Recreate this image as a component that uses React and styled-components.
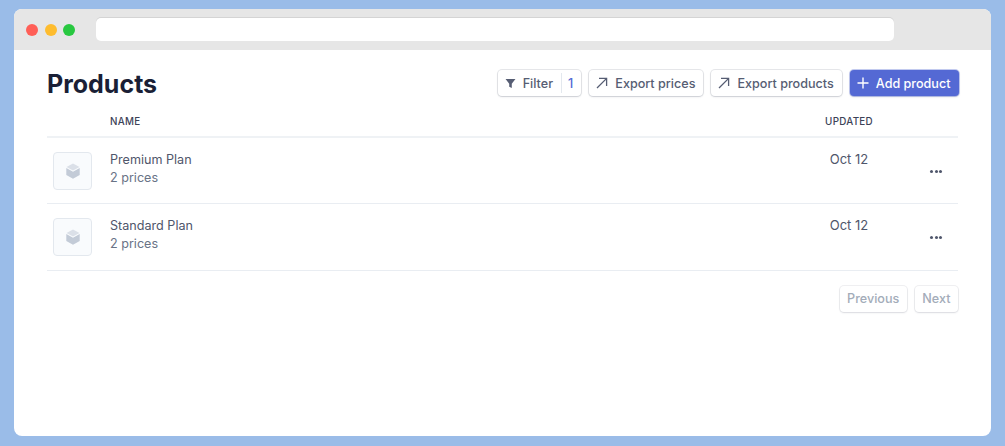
import React from "react";
import styled, { createGlobalStyle } from "styled-components";

const products = [
  { name: "Premium Plan", prices: "2 prices", updated: "Oct 12" },
  { name: "Standard Plan", prices: "2 prices", updated: "Oct 12" },
];

function ArrowIcon() {
  return (
    <Icon viewBox="0 0 12 12" fill="none" stroke="currentColor" strokeWidth="1.3">
      <path d="M1 11 L10.4 1.6 M3 1.4 H10.6 V9" />
    </Icon>
  );
}

function BoxIcon() {
  return (
    <svg width="14" height="16" viewBox="0 0 14 16">
      <path d="M7 0.5 L13.5 4 L7 7.5 L0.5 4 Z" fill="#dbe0e8" />
      <path d="M0.3 5 L7 8.7 L13.7 5 V12 L7 15.7 L0.3 12 Z" fill="#c3cbd7" />
    </svg>
  );
}

export default function App() {
  return (
    <>
      <GlobalStyle />
      <Page>
        <Browser>
          <TitleBar>
            <Lights>
              <Light color="#ff5f57" />
              <Light color="#febc2e" />
              <Light color="#28c840" />
            </Lights>
            <AddressBar />
          </TitleBar>
          <Content>
            <Header>
              <Title>Products</Title>
              <Actions>
                <Button>
                  <FilterIcon viewBox="0 0 12 12" fill="currentColor">
                    <path d="M0.6 1.2 H11.4 L7.4 6.2 V11 L4.6 9.6 V6.2 Z" />
                  </FilterIcon>
                  Filter
                  <FilterCount>1</FilterCount>
                </Button>
                <Button>
                  <ArrowIcon />
                  Export prices
                </Button>
                <Button>
                  <ArrowIcon />
                  Export products
                </Button>
                <PrimaryButton>
                  <Icon viewBox="0 0 12 12" fill="none" stroke="currentColor" strokeWidth="1.4">
                    <path d="M6 0.5 V11.5 M0.5 6 H11.5" />
                  </Icon>
                  Add product
                </PrimaryButton>
              </Actions>
            </Header>
            <HeadRow>
              <span />
              <HeadCell>NAME</HeadCell>
              <HeadCell $center>UPDATED</HeadCell>
              <span />
            </HeadRow>
            {products.map((product) => (
              <Row key={product.name}>
                <Thumb>
                  <BoxIcon />
                </Thumb>
                <NameCell>
                  <Name>{product.name}</Name>
                  <Prices>{product.prices}</Prices>
                </NameCell>
                <Updated>{product.updated}</Updated>
                <More>
                  <Dot />
                  <Dot />
                  <Dot />
                </More>
              </Row>
            ))}
            <Pagination>
              <PageButton>Previous</PageButton>
              <PageButton>Next</PageButton>
            </Pagination>
          </Content>
        </Browser>
      </Page>
    </>
  );
}

const GlobalStyle = createGlobalStyle`
  html, body {
    margin: 0;
    padding: 0;
  }
  body {
    font-family: Inter, "Liberation Sans", sans-serif;
    background: #9abce8;
  }
`;

const Page = styled.div`
  width: 1005px;
  height: 446px;
  box-sizing: border-box;
  padding: 9px 14px 10px;
  background: #9abce8;
`;

const Browser = styled.div`
  height: 100%;
  display: flex;
  flex-direction: column;
  background: #fff;
  border-radius: 8px;
  overflow: hidden;
`;

const TitleBar = styled.div`
  flex: 0 0 41px;
  display: flex;
  align-items: center;
  gap: 21px;
  padding: 0 97px 0 12px;
  background: #e6e6e6;
`;

const Lights = styled.div`
  display: flex;
  gap: 6.5px;
`;

const Light = styled.span`
  width: 12px;
  height: 12px;
  border-radius: 50%;
  background: ${(p) => p.color};
`;

const AddressBar = styled.div`
  flex: 1;
  height: 23px;
  background: #fff;
  border-radius: 5px;
  box-shadow: 0 -1px 0 #d4d4d4;
`;

const Content = styled.div`
  flex: 1;
  padding: 20px 33px 0;
`;

const Header = styled.div`
  display: flex;
  align-items: center;
  justify-content: space-between;
  height: 26px;
`;

const Title = styled.h1`
  margin: 2px 0 0;
  font-size: 25px;
  font-weight: 700;
  color: #1a1f36;
`;

const Actions = styled.div`
  display: flex;
  gap: 8px;
  margin-right: -0.5px;
`;

const Button = styled.button`
  display: flex;
  align-items: center;
  gap: 7px;
  height: 26px;
  padding: 0 8px 0 7px;
  border: 0;
  border-radius: 4px;
  background: #fff;
  color: #565d73;
  font: 500 12.6px Inter, sans-serif;
  box-shadow: 0 0 0 1px rgba(60, 66, 87, 0.12), 0 1px 2px rgba(60, 66, 87, 0.16);
`;

const PrimaryButton = styled(Button)`
  background: #5469d4;
  color: #fff;
  box-shadow: 0 0 0 1px rgba(84, 105, 212, 0.35), 0 1px 2px rgba(60, 66, 87, 0.2);
`;

const FilterCount = styled.span`
  align-self: stretch;
  display: flex;
  align-items: center;
  margin-left: 1px;
  padding-left: 6px;
  color: #5469d4;
  border-left: 1px solid #e3e8ee;
  margin-block: 3px;
`;

const Icon = styled.svg`
  width: 12px;
  height: 12px;
  flex-shrink: 0;
`;

const FilterIcon = styled(Icon)`
  width: 11px;
  height: 11px;
`;

const columns = `
  display: grid;
  grid-template-columns: 63px 1fr 78px 70px;
  align-items: center;
  border-bottom: 1px solid #e9edf2;
`;

const HeadRow = styled.div`
  ${columns}
  height: 41.5px;
  padding-top: 12px;
  box-sizing: border-box;
  border-bottom-width: 2px;
  border-bottom-color: #eff2f5;
`;

const HeadCell = styled.div`
  font-size: 9.8px;
  font-weight: 500;
  letter-spacing: 0.3px;
  color: #3c4257;
  text-align: ${(p) => (p.$center ? "center" : "left")};
`;

const Row = styled.div`
  ${columns}
  height: 66.5px;
  box-sizing: border-box;
`;

const Thumb = styled.div`
  width: 39px;
  height: 38px;
  margin: 1px 0 0 6px;
  display: flex;
  align-items: center;
  justify-content: center;
  box-sizing: border-box;
  border: 1px solid #e3e8ee;
  border-radius: 4px;
  background: #f9fbfd;
`;

const NameCell = styled.div`
  display: flex;
  flex-direction: column;
  gap: 2px;
  margin-top: -3px;
`;

const Name = styled.div`
  font-size: 12.6px;
  line-height: 16px;
  color: #4f566b;
`;

const Prices = styled.div`
  font-size: 12.6px;
  line-height: 16px;
  color: #697386;
`;

const Updated = styled.div`
  align-self: start;
  padding-top: 13px;
  font-size: 13px;
  line-height: 16px;
  text-align: center;
  color: #4f566b;
`;

const More = styled.div`
  display: flex;
  justify-content: flex-end;
  gap: 1.5px;
  padding-right: 16px;
  margin-top: 1.5px;
`;

const Dot = styled.span`
  width: 3px;
  height: 3px;
  border-radius: 50%;
  background: #4f566b;
`;

const Pagination = styled.div`
  display: flex;
  justify-content: flex-end;
  gap: 8px;
  margin: 15px 0 0;
`;

const PageButton = styled(Button)`
  padding: 0 7.5px;
  color: #a3acb9;
  box-shadow: 0 0 0 1px rgba(60, 66, 87, 0.08), 0 1px 2px rgba(60, 66, 87, 0.12);
`;
